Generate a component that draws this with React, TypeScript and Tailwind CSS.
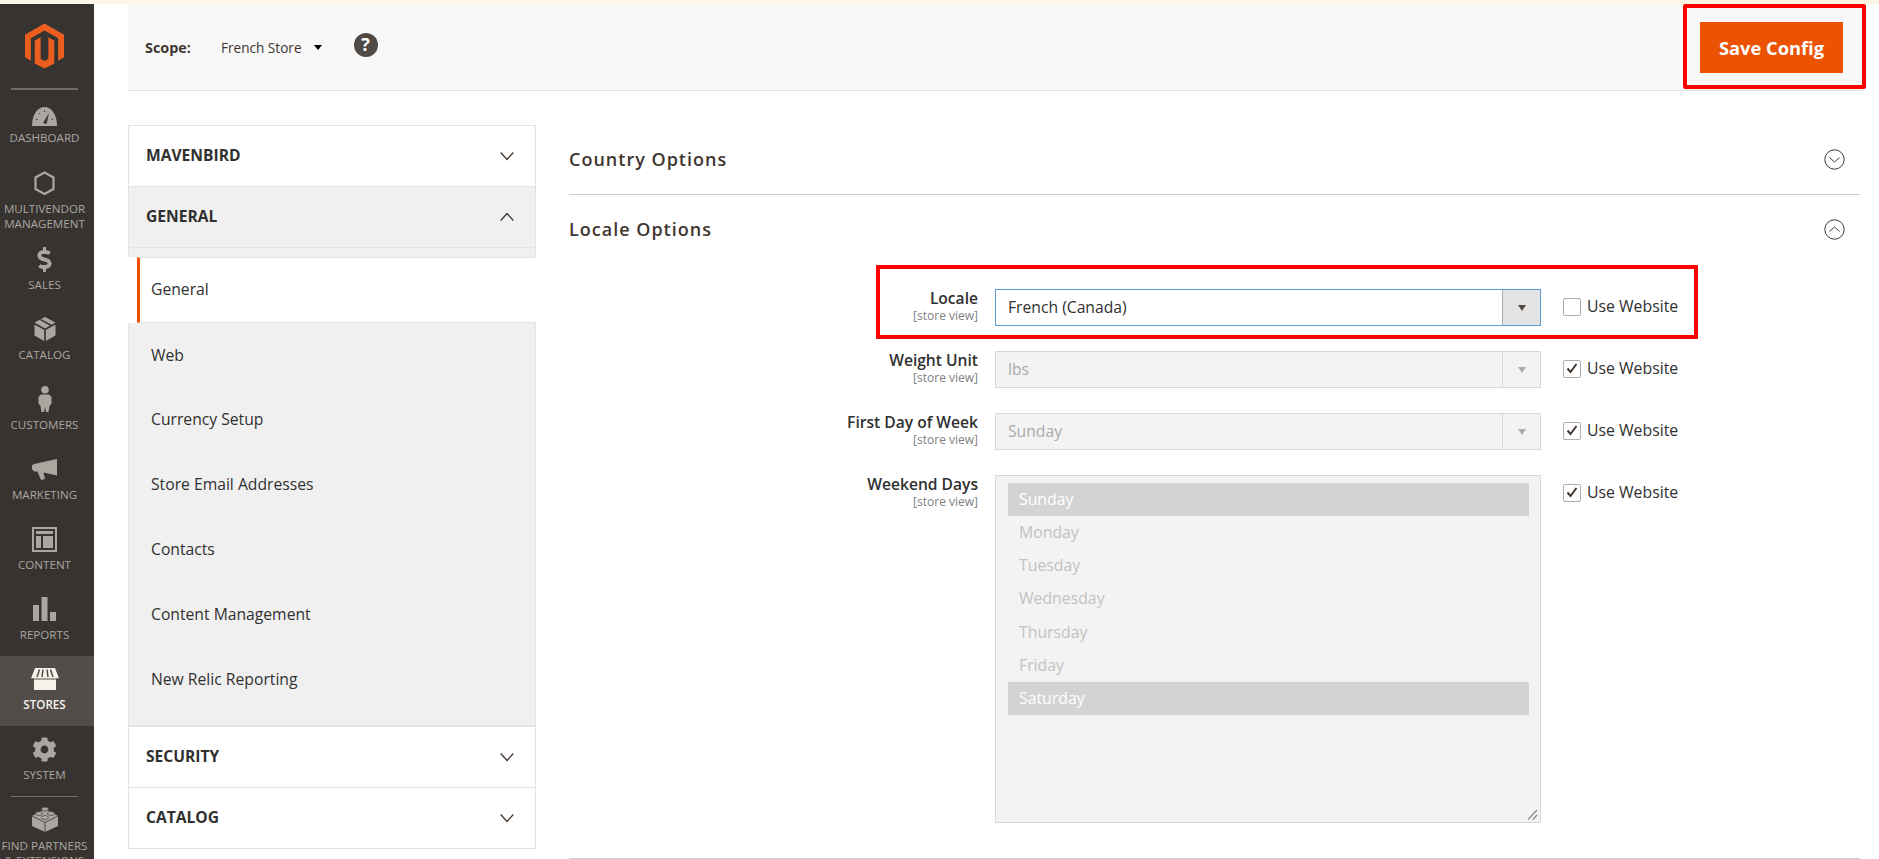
import React from 'react';
import { FaCog, FaDollarSign } from 'react-icons/fa';

const GaugeIcon = () => (
  <svg width="25" height="19" viewBox="0 0 25 19">
    <path d="M0 19C0 7 6 0 12.5 0S25 7 25 19Z" fill="#aaa6a0" />
    <path d="M4 12l1.500.5M7 6l1 1.200M12.500 3.500v1.600M21 12l-1.500.5" stroke="#373330" strokeWidth="1" />
    <path d="M11 16l6-10-2.400 11Z" fill="#373330" />
  </svg>
);

const HexIcon = () => (
  <svg width="21" height="25" viewBox="0 0 21 25">
    <path d="M10.500 1.500l9 5v11.500l-9 5-9-5V6.500Z" fill="none" stroke="#aaa6a0" strokeWidth="2.200" />
  </svg>
);

const BoxIcon = () => (
  <svg width="22" height="24" viewBox="0 0 22 24">
    <path d="M11 0l10.500 5.500L11 11.500.5 5.500Z" fill="#aaa6a0" />
    <path d="M6.500 2.600l10.500 5.600" stroke="#373330" strokeWidth="1.600" />
    <path d="M.5 7.500l9.700 5.500V24L.5 18.500ZM21.500 7.500L11.800 13V24l9.700-5.500Z" fill="#aaa6a0" />
  </svg>
);

const PersonIcon = () => (
  <svg width="14" height="26" viewBox="0 0 14 26">
    <circle cx="7" cy="3.800" r="3.800" fill="#aaa6a0" />
    <path d="M3 8.500h8l2.500 2.500v6.500L11.500 20l-1 6H8l-1-5-1 5H3.500l-1-6-2-2.500V11Z" fill="#aaa6a0" />
  </svg>
);

const MegaphoneIcon = () => (
  <svg width="25" height="21" viewBox="0 0 25 21">
    <path d="M25 0v16.500L11.500 13.500 13 20l-4 1-3.500-8.500H2L0 10V6.500L2 5Z" fill="#aaa6a0" />
  </svg>
);

const ContentIcon = () => (
  <svg width="25" height="25" viewBox="0 0 25 25">
    <rect x="1" y="1" width="23" height="23" fill="none" stroke="#aaa6a0" strokeWidth="2" />
    <path d="M4 4h17v3H4ZM4 9h5v12H4ZM11 9h10v12H11Z" fill="#aaa6a0" />
  </svg>
);

const BarsIcon = () => (
  <svg width="23" height="24" viewBox="0 0 23 24">
    <path d="M0 8h6v16H0ZM8.500 0h6v24h-6ZM17 15h6v9h-6Z" fill="#aaa6a0" />
  </svg>
);

const StoreIcon = () => (
  <svg width="28" height="22" viewBox="0 0 28 22">
    <path d="M3 9h22v13H3Z" fill="#f7f3eb" />
    <path d="M4 0h20l4 10.500H0Z" fill="#f7f3eb" />
    <path d="M8.500 1.500L6 9M12 1.500L11 9M16 1.500L17 9M19.500 1.500L22 9" stroke="#524d49" strokeWidth="1.500" />
    <path d="M0 11h28" stroke="#524d49" strokeWidth="1" />
  </svg>
);

const BrickIcon = () => (
  <svg width="26" height="26" viewBox="0 0 26 26">
    <path d="M13 3L26 10v10L13 26 0 20V10Z" fill="#aaa6a0" />
    <path d="M0 10l13 6.500L26 10M13 16.500V26" fill="none" stroke="#373330" strokeWidth="0.800" />
    <ellipse cx="13" cy="3" rx="3.500" ry="2" fill="#aaa6a0" stroke="#373330" strokeWidth="0.600" />
    <ellipse cx="7" cy="7.500" rx="3.500" ry="2" fill="#aaa6a0" stroke="#373330" strokeWidth="0.600" />
    <ellipse cx="19" cy="7.500" rx="3.500" ry="2" fill="#aaa6a0" stroke="#373330" strokeWidth="0.600" />
    <ellipse cx="13" cy="11.500" rx="3.500" ry="2" fill="#aaa6a0" stroke="#373330" strokeWidth="0.600" />
  </svg>
);

const NAV_ITEMS = [
  { label: 'Sales', icon: <FaDollarSign size={25} color="#aaa6a0" /> },
  { label: 'Catalog', icon: <BoxIcon /> },
  { label: 'Customers', icon: <PersonIcon /> },
  { label: 'Marketing', icon: <MegaphoneIcon /> },
  { label: 'Content', icon: <ContentIcon /> },
  { label: 'Reports', icon: <BarsIcon /> },
  { label: 'Stores', icon: <StoreIcon />, active: true },
  { label: 'System', icon: <FaCog size={25} color="#aaa6a0" /> },
];

const NavItem = ({ label, icon, active }: { label: string; icon: React.ReactNode; active?: boolean }) => (
  <div className={`h-[70px] pt-[8px] pr-[5px] flex flex-col items-center ${active ? 'bg-[#524d49]' : ''}`}>
    <div className="h-[30px] flex items-center justify-center">{icon}</div>
    <div className={`mt-[4px] leading-[14px] text-[11.600px] uppercase ${active ? 'text-[#f7f3eb] font-semibold' : 'text-[#aaa6a0]'}`}>
      {label}
    </div>
  </div>
);

const Sidebar = () => (
  <aside className="w-[94px] shrink-0 bg-[#373330] overflow-hidden">
    <div className="h-[84px] pt-[19px] pr-[5px] flex justify-center">
      <svg width="39" height="46" viewBox="0 0 40 46">
        <path d="M20 0l20 11.500v23L34 38V15L20 7 6 15v23l-6-3.500v-23Z" fill="#eb5e1f" />
        <path d="M10 17.500L16 14v22l4 2.500 4-2.500V14l6 3.500V41l-10 5-10-5Z" fill="#eb5e1f" />
      </svg>
    </div>
    <div className="ml-[11px] mr-[16px] h-[2px] bg-[#736d67]" />
    <div className="h-[70px] mt-[4px] pt-[7px] pr-[5px] flex flex-col items-center">
      <div className="h-[30px] flex items-center justify-center"><GaugeIcon /></div>
      <div className="leading-[14px] text-[11.600px] uppercase text-[#aaa6a0]">Dashboard</div>
    </div>
    <div className="h-[72px] pt-[4px] pr-[5px] flex flex-col items-center">
      <div className="h-[30px] flex items-center justify-center"><HexIcon /></div>
      <div className="mt-[3px] leading-[15px] text-[11.600px] uppercase text-[#aaa6a0] text-center">
        Multivendor<br />Management
      </div>
    </div>
    {NAV_ITEMS.map((item) => (
      <NavItem key={item.label} {...item} />
    ))}
    <div className="ml-[11px] mr-[16px] h-px bg-[#736d67]" />
    <div className="pt-[9px] pr-[5px] flex flex-col items-center">
      <BrickIcon />
      <div className="mt-[6px] leading-[15px] text-[11.600px] uppercase text-[#aaa6a0] text-center whitespace-nowrap">
        Find Partners<br />&amp; Extensions
      </div>
    </div>
  </aside>
);

const Chevron = ({ up }: { up?: boolean }) => (
  <svg width="14" height="10" viewBox="0 0 14 10" className="shrink-0">
    <path d={up ? 'M.7 8.500L7 1.500l6.300 7' : 'M.7 1.500L7 8.500l6.300-7'} fill="none" stroke="#41362f" strokeWidth="1.300" />
  </svg>
);

const TabHeading = ({ title, open }: { title: string; open?: boolean }) => (
  <div className={`h-[61px] pl-[17px] pr-[21px] flex items-center justify-between border-b border-[#e3e3e3] ${open ? 'bg-[#f0f0f0]' : 'bg-white'}`}>
    <span className="text-[15.600px] font-bold text-[#303030]">{title}</span>
    <Chevron up={open} />
  </div>
);

const SUB_ITEMS = ['Web', 'Currency Setup', 'Store Email Addresses', 'Contacts', 'Content Management', 'New Relic Reporting'];

const TabsPanel = () => (
  <div className="w-[408px] shrink-0">
    <div className="border border-[#e3e3e3] border-b-0 bg-white">
      <TabHeading title="MAVENBIRD" />
      <TabHeading title="GENERAL" open />
      <div className="h-[9px] bg-[#f0f0f0]" />
    </div>
    <div className="h-[66px] bg-white flex">
      <div className="ml-[9px] flex-1 flex items-center border-l-[3px] border-l-[#eb5202] border-y border-y-[#e3e3e3] pl-[11px] text-[15.700px] text-[#303030]">
        General
      </div>
    </div>
    <div className="border-x border-[#e3e3e3] bg-[#f0f0f0] pb-[13px]">
      {SUB_ITEMS.map((item) => (
        <div key={item} className="h-[64.800px] pl-[22px] flex items-center text-[15.700px] text-[#303030]">
          {item}
        </div>
      ))}
    </div>
    <div className="border border-[#e3e3e3] border-b-0 bg-white">
      <div className="border-t border-[#e3e3e3]" />
      <TabHeading title="SECURITY" />
      <TabHeading title="CATALOG" />
    </div>
  </div>
);

const CircleChevron = ({ up }: { up?: boolean }) => (
  <svg width="21" height="21" viewBox="0 0 21 21">
    <circle cx="10.500" cy="10.500" r="9.700" fill="none" stroke="#41362f" strokeWidth="1" />
    <path d={up ? 'M5.500 12.500l5-4.500 5 4.500' : 'M5.500 8.500l5 4.500 5-4.500'} fill="none" stroke="#41362f" strokeWidth="1" />
  </svg>
);

const CheckRow = ({ checked }: { checked?: boolean }) => (
  <div className="flex items-center gap-[6px] ml-[22px] mt-[6px] text-[15.800px] text-[#303030] whitespace-nowrap">
    <div className="w-[18px] h-[18px] border border-[#adadad] rounded-[2px] bg-white flex items-center justify-center">
      {checked && (
        <svg width="12" height="11" viewBox="0 0 12 11">
          <path d="M1.500 5.500L4.500 9l6-8" fill="none" stroke="#41362f" strokeWidth="2" />
        </svg>
      )}
    </div>
    Use Website
  </div>
);

const FieldLabel = ({ label }: { label: string }) => (
  <div className="w-[409px] -mt-[1px] text-right shrink-0">
    <div className="text-[15.600px] leading-[21px] font-semibold text-[#303030] whitespace-nowrap">{label}</div>
    <div className="text-[12px] leading-[14px] text-[#808080]">[store view]</div>
  </div>
);

const SelectBox = ({ value, disabled }: { value: string; disabled?: boolean }) => (
  <div className={`w-[546px] h-[37px] ml-[17px] flex border ${disabled ? 'border-[#d8d8d8] bg-[#f3f3f3] text-[#ababab]' : 'border-[#5c9fd6] bg-white text-[#303030]'}`}>
    <div className="flex-1 pl-[12px] flex items-center text-[15.700px]">{value}</div>
    <div className={`w-[38px] flex items-center justify-center border-l ${disabled ? 'border-[#d8d8d8]' : 'border-[#adadad] bg-[#e3e3e3]'}`}>
      <div className={`w-0 h-0 border-x-[4.500px] border-x-transparent border-t-[6px] ${disabled ? 'border-t-[#adadad]' : 'border-t-[#514943]'}`} />
    </div>
  </div>
);

const DAYS = ['Sunday', 'Monday', 'Tuesday', 'Wednesday', 'Thursday', 'Friday', 'Saturday'];

const WeekendList = () => (
  <div className="relative w-[546px] h-[348px] ml-[17px] border border-[#d8d8d8] bg-[#f3f3f3] pt-[7px] pl-[12px] pr-[11px]">
    {DAYS.map((day) => {
      const selected = day === 'Sunday' || day === 'Saturday';
      return (
        <div key={day} className={`h-[33.200px] pl-[11px] flex items-center text-[15.800px] ${selected ? 'bg-[#d3d3d3] text-white font-medium' : 'text-[#c2c2c2]'}`}>
          {day}
        </div>
      );
    })}
    <svg className="absolute right-[2px] bottom-[2px]" width="11" height="11" viewBox="0 0 11 11">
      <path d="M1 10.500L10 1M6 10.500L10 6" stroke="#8a8a8a" strokeWidth="1.200" />
    </svg>
  </div>
);

const App = () => (
  <div className="relative h-screen w-full bg-white overflow-hidden flex flex-col font-['Open_Sans',sans-serif]">
    <div className="h-[4px] shrink-0 bg-[#fdf6e6]" />
    <div className="flex flex-1 min-h-0">
      <Sidebar />
      <main className="flex-1 min-w-0 pl-[34px] pr-[16px]">
        {/* Scope bar */}
        <div className="h-[87px] bg-[#f8f8f8] border-b border-[#e3e3e3] flex items-center justify-between pr-[20px]">
          <div className="flex items-center pl-[17px] pt-[2px] text-[#41362f]">
            <span className="font-bold text-[14.400px]">Scope:</span>
            <span className="ml-[30px] text-[13.600px]">French Store</span>
            <div className="ml-[12px] w-0 h-0 border-x-[4px] border-x-transparent border-t-[5px] border-t-black" />
            <div className="ml-[32px] -mt-[6px] w-[24px] h-[24px] rounded-full bg-[#514943] flex items-center justify-center text-white font-bold text-[18px]">
              ?
            </div>
          </div>
          <div className="relative">
            <div className="w-[143px] h-[51px] pt-[1px] bg-[#eb5202] text-white font-bold text-[18.300px] flex items-center justify-center">
              Save Config
            </div>
            <div className="absolute -left-[17px] -right-[23px] -top-[18px] -bottom-[16px] border-[4px] border-[#ff0000] rounded-[2px]" />
          </div>
        </div>

        <div className="flex pt-[34px]">
          <TabsPanel />

          {/* Config sections */}
          <div className="flex-1 min-w-0 ml-[33px] mr-[3px]">
            <div className="h-[70px] pb-[1px] border-b border-[#cccccc] flex items-center justify-between pr-[15px]">
              <span className="text-[18px] tracking-[1px] font-semibold text-[#41362f]">Country Options</span>
              <CircleChevron />
            </div>
            <div className="h-[71px] pb-[2px] flex items-center justify-between pr-[15px]">
              <span className="text-[18px] tracking-[1px] font-semibold text-[#41362f]">Locale Options</span>
              <CircleChevron up />
            </div>

            <div className="relative flex items-start mt-[23px]">
              <FieldLabel label="Locale" />
              <SelectBox value="French (Canada)" />
              <CheckRow />
              <div className="absolute left-[307px] w-[822px] -top-[24px] -bottom-[13px] border-[4px] border-[#ff0000] rounded-[1px]" />
            </div>
            <div className="flex items-start mt-[25px]">
              <FieldLabel label="Weight Unit" />
              <SelectBox value="lbs" disabled />
              <CheckRow checked />
            </div>
            <div className="flex items-start mt-[25px]">
              <FieldLabel label="First Day of Week" />
              <SelectBox value="Sunday" disabled />
              <CheckRow checked />
            </div>
            <div className="flex items-start mt-[25px]">
              <FieldLabel label="Weekend Days" />
              <WeekendList />
              <CheckRow checked />
            </div>
            <div className="mt-[35px] border-b border-[#cccccc]" />
          </div>
        </div>
      </main>
    </div>
  </div>
);

export default App;
